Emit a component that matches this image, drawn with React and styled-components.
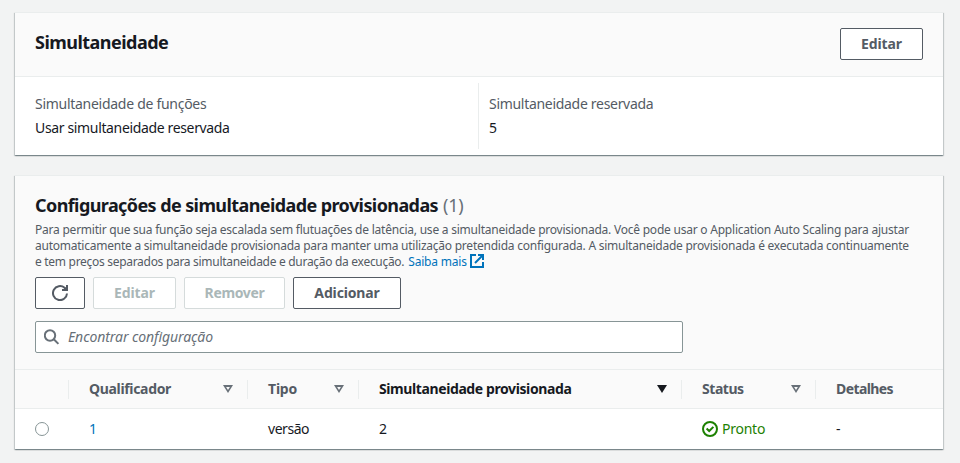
import React from 'react';
import styled, { createGlobalStyle } from 'styled-components';

const GlobalStyle = createGlobalStyle`
  *, *::before, *::after { box-sizing: border-box; }
  body {
    margin: 0;
    background: #f2f3f3;
    color: #16191f;
    font-family: 'Noto Sans', 'Open Sans', sans-serif;
    font-size: 14px;
    line-height: 22px;
  }
`;

const Page = styled.main`
  display: flex;
  flex-direction: column;
  gap: 20px;
  height: 463px;
  padding: 12px 17px 0 15px;
  overflow: hidden;
`;

const Card = styled.section`
  display: flex;
  flex-direction: column;
  height: ${(p) => p.$height}px;
  background: #fff;
  border-top: 1px solid #eaeded;
  box-shadow: 0 1px 1px 0 rgba(0, 28, 36, 0.3), 1px 1px 1px 0 rgba(0, 28, 36, 0.15),
    -1px 1px 1px 0 rgba(0, 28, 36, 0.15);
`;

const CardHeader = styled.header`
  display: flex;
  justify-content: space-between;
  align-items: flex-start;
  height: 64px;
  padding: 15px 20px 0;
  background: #fafafa;
  border-bottom: 1px solid #eaeded;
`;

const Label = styled.span`
  white-space: nowrap;
  letter-spacing: ${(p) => p.$track || 0}px;
`;

const Title = styled.h2`
  margin: 0;
  font-size: 18px;
  line-height: 22px;
  font-weight: 700;
  white-space: nowrap;
`;

const HeaderTitle = styled(Title)`
  padding-top: 3px;
`;

const Count = styled.span`
  margin-left: 5px;
  color: #687078;
  font-weight: 400;
  letter-spacing: -0.2px;
`;

const Button = styled.button`
  display: flex;
  align-items: center;
  justify-content: center;
  width: ${(p) => p.$width}px;
  height: 32px;
  padding: 0;
  border: 1px solid #545b64;
  border-radius: 2px;
  background: #fff;
  color: #545b64;
  font: inherit;
  font-weight: 700;

  &:disabled {
    border-color: #d5dbdb;
    color: #aab7b8;
  }
`;

const Fields = styled.dl`
  display: grid;
  grid-template-columns: 464px 1fr;
  margin: 0;
  padding: 6px 0;
  flex: 1;
`;

const Field = styled.div`
  padding: 9px 0 0 ${(p) => (p.$first ? 20 : 10)}px;
  border-right: ${(p) => (p.$first ? '1px solid #eaeded' : 'none')};
`;

const FieldName = styled.dt`
  line-height: 24px;
  color: #545b64;
`;

const FieldValue = styled.dd`
  margin: 0;
  line-height: 24px;
`;

const TableTop = styled.header`
  display: flex;
  flex-direction: column;
  height: 194px;
  padding: 18px 20px 0;
  background: #fafafa;
  border-bottom: 1px solid #eaeded;
`;

const Description = styled.p`
  display: flex;
  flex-direction: column;
  margin: 6px 0 0;
  font-size: 12px;
  line-height: 16px;
  color: #545b64;
`;

const DescriptionEnd = styled.span`
  display: flex;
  height: 16px;
`;

const Link = styled.a`
  display: inline-flex;
  color: #0073bb;
  text-decoration: none;
`;

const LearnMore = styled(Link)`
  margin-left: 4px;
  gap: 3px;
  align-items: flex-start;
`;

const Actions = styled.div`
  display: flex;
  gap: 8px;
  margin-top: 7px;
`;

const SearchBox = styled.div`
  display: flex;
  align-items: center;
  gap: 8px;
  width: 648px;
  height: 32px;
  margin-top: 12px;
  padding-left: 8px;
  border: 1px solid #879596;
  border-radius: 2px;
  background: #fff;
  color: #687078;
  font-style: italic;
`;

const TableRow = styled.div`
  display: grid;
  grid-template-columns: 54px 179px 111px 323px 134px 127px;
  align-items: center;
  height: ${(p) => (p.$head ? 39 : 40)}px;
  background: ${(p) => (p.$head ? '#fafafa' : '#fff')};
  border-bottom: ${(p) => (p.$head ? '1px solid #eaeded' : 'none')};
`;

const HeadCell = styled.div`
  display: flex;
  align-items: center;
  justify-content: space-between;
  height: 19px;
  padding: 0 14px 0 20px;
  border-right: ${(p) => (p.$last ? 'none' : '1px solid #eaeded')};
  color: ${(p) => (p.$sorted ? '#16191f' : '#545b64')};
  font-weight: 700;
`;

const Cell = styled.div`
  display: flex;
  align-items: center;
  padding-left: 20px;
`;

const Radio = styled.span`
  width: 14px;
  height: 14px;
  border: 1px solid #879596;
  border-radius: 50%;
  background: #fff;
`;

const Status = styled.span`
  display: flex;
  align-items: center;
  gap: 4px;
  color: #1d8102;
`;

const Icon = styled.svg`
  flex: none;
  fill: none;
  stroke: currentColor;
  stroke-width: 2;
`;

const SortArrow = ({ filled }) => (
  <Icon width="10" height="8" viewBox="0 0 10 8">
    {filled ? (
      <path d="M0 0h10L5 8z" fill="currentColor" stroke="none" />
    ) : (
      <path d="M0 0h10L5 8zM3.1 1.9L5 4.9l1.9-3z" fill="#687078" fillRule="evenodd" stroke="none" />
    )}
  </Icon>
);

const RefreshIcon = () => (
  <Icon width="16" height="16" viewBox="0 0 16 16">
    <path d="M15 8.5A7 7 0 1 1 12.6 2.8L14.5 4.8" />
    <path d="M10 5h5V0" />
    <path d="M12 3.5L14.5 2v2.5z" fill="currentColor" stroke="none" />
  </Icon>
);

const ExternalIcon = () => (
  <Icon width="14" height="14" viewBox="0 0 14 14">
    <path d="M6 1H1v12h12V8" />
    <path d="M8 1h5v5M13 1L5 9" />
  </Icon>
);

const SearchIcon = () => (
  <Icon width="16" height="16" viewBox="0 0 16 16">
    <circle cx="6" cy="6.5" r="5.2" />
    <path d="M9.8 10.3l4.6 4.6" />
  </Icon>
);

const CheckIcon = () => (
  <Icon width="16" height="16" viewBox="0 0 16 16">
    <circle cx="8" cy="8" r="7" />
    <path d="M4.6 7.5l2.6 2.5 4.2-4.1" />
  </Icon>
);

const columns = [
  { name: 'Qualificador', track: -0.33 },
  { name: 'Tipo', track: -0.2 },
  { name: 'Simultaneidade provisionada', track: -0.4, sorted: true },
  { name: 'Status', track: -0.45 },
];

export default function App() {
  return (
    <>
      <GlobalStyle />
      <Page>
        <Card $height={143}>
          <CardHeader>
            <HeaderTitle><Label $track={-0.53}>Simultaneidade</Label></HeaderTitle>
            <Button $width={83}><Label $track={-0.08}>Editar</Label></Button>
          </CardHeader>
          <Fields>
            <Field $first>
              <FieldName><Label $track={-0.28}>Simultaneidade de funções</Label></FieldName>
              <FieldValue><Label $track={-0.35}>Usar simultaneidade reservada</Label></FieldValue>
            </Field>
            <Field>
              <FieldName><Label $track={-0.3}>Simultaneidade reservada</Label></FieldName>
              <FieldValue>5</FieldValue>
            </Field>
          </Fields>
        </Card>

        <Card $height={274}>
          <TableTop>
            <Title>
              <Label $track={-0.59}>Configurações de simultaneidade provisionadas</Label>
              <Count>(1)</Count>
            </Title>
            <Description>
              <Label $track={-0.226}>
                Para permitir que sua função seja escalada sem flutuações de latência, use a simultaneidade provisionada. Você pode usar o Application Auto Scaling para ajustar
              </Label>
              <Label $track={-0.239}>
                automaticamente a simultaneidade provisionada para manter uma utilização pretendida configurada. A simultaneidade provisionada é executada continuamente
              </Label>
              <DescriptionEnd>
                <Label $track={-0.295}>e tem preços separados para simultaneidade e duração da execução.</Label>
                <LearnMore><Label $track={-0.2}>Saiba mais</Label><ExternalIcon /></LearnMore>
              </DescriptionEnd>
            </Description>
            <Actions>
              <Button $width={50} aria-label="Atualizar"><RefreshIcon /></Button>
              <Button $width={83} disabled><Label $track={-0.08}>Editar</Label></Button>
              <Button $width={101} disabled><Label $track={-0.35}>Remover</Label></Button>
              <Button $width={108}><Label $track={-0.15}>Adicionar</Label></Button>
            </Actions>
            <SearchBox>
              <SearchIcon />
              <Label $track={-0.08}>Encontrar configuração</Label>
            </SearchBox>
          </TableTop>
          <TableRow $head>
            <HeadCell />
            {columns.map((c) => (
              <HeadCell key={c.name} $sorted={c.sorted}>
                <Label $track={c.track}>{c.name}</Label>
                <SortArrow filled={c.sorted} />
              </HeadCell>
            ))}
            <HeadCell $last><Label $track={-0.6}>Detalhes</Label></HeadCell>
          </TableRow>
          <TableRow>
            <Cell><Radio /></Cell>
            <Cell><Link>1</Link></Cell>
            <Cell><Label $track={-0.45}>versão</Label></Cell>
            <Cell>2</Cell>
            <Cell><Status><CheckIcon /><Label $track={-0.25}>Pronto</Label></Status></Cell>
            <Cell>-</Cell>
          </TableRow>
        </Card>
      </Page>
    </>
  );
}
